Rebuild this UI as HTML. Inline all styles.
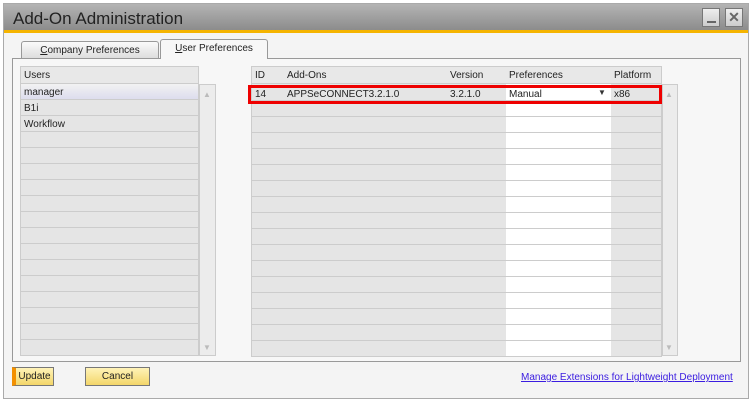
<!DOCTYPE html>
<html><head><style>
*{margin:0;padding:0;box-sizing:border-box}
body{width:752px;height:402px;background:#fff;font-family:"Liberation Sans",sans-serif;font-size:10px;color:#222;position:relative;overflow:hidden}
.abs{position:absolute}
.win{left:3px;top:3px;width:746px;height:396px;border:1px solid #aaa;background:#f4f4f4}
.title{left:4px;top:4px;width:744px;height:26px;background:linear-gradient(#b4b4b4,#8c8c8c);font-size:17px;color:#222;padding:5px 0 0 9px}
.orange{left:4px;top:30px;width:744px;height:3px;background:#f5b400}
.tbtn{top:8px;width:18px;height:19px;border:1px solid #777;background:linear-gradient(#eee,#ccc)}
.tab{height:17px;border:1px solid #999;border-bottom:none;border-radius:3px 3px 0 0;text-align:center;padding-top:3px}
.panel{left:12px;top:58px;width:729px;height:304px;border:1px solid #999;background:#f7f7f7}
.cell{position:absolute;border-right:1px solid #ccc;border-bottom:1px solid #ccc;background:#e5e5e5;padding:3px 3px;white-space:nowrap}
.sb{background:#ececec;border:1px solid #ccc}
.btn{top:367px;height:19px;border:1px solid #777;background:linear-gradient(#fff3b8,#f3d66a);text-align:center;padding-top:3px}
</style></head><body>
<div class="abs win"></div>
<div class="abs title">Add-On Administration</div>
<div class="abs orange"></div>
<div class="abs tbtn" style="left:702px"><div class="abs" style="left:4px;top:12px;width:9px;height:2px;background:#666"></div></div>
<div class="abs tbtn" style="left:725px;color:#666;font-size:14px;font-weight:bold;text-align:center;line-height:17px">✕</div>
<div class="abs tab" style="left:21px;top:41px;width:138px;background:linear-gradient(#fafafa,#ddd)"><u>C</u>ompany Preferences</div>
<div class="abs tab" style="left:160px;top:39px;width:108px;height:20px;background:#f7f7f7;z-index:2"><u>U</u>ser Preferences</div>
<div class="abs panel"></div>
<div id="g"></div>
<div class="abs" style="left:248px;top:85px;width:414px;height:19px;border:3px solid #e00;z-index:5"></div>
<div class="abs btn" style="left:12px;width:42px;border-left:4px solid #f39000">Update</div>
<div class="abs btn" style="left:85px;width:65px">Cancel</div>
<div class="abs" style="left:521px;top:372px;color:#3a1ce0;text-decoration:underline">Manage Extensions for Lightweight Deployment</div>
<script>
var h='';
function c(x,y,w,hh,t,st){h+='<div class="cell" style="left:'+x+'px;top:'+y+'px;width:'+w+'px;height:'+hh+'px;'+(st||'')+'">'+(t||'')+'</div>';}
c(20,66,179,18,'Users','background:#e8e8e8;border-top:1px solid #ccc;border-left:1px solid #ccc');
var u=['manager','B1i','Workflow'];
for(var i=0;i<17;i++){var y=84+i*16;c(20,y,179,16,u[i]||'',(i==0?'background:linear-gradient(#f2f2f2,#dde);':'')+'border-left:1px solid #ccc');}
var cols=[[251,34,'ID'],[284,164,'Add-Ons'],[447,60,'Version'],[506,106,'Preferences'],[611,51,'Platform']];
var r=['14','APPSeCONNECT3.2.1.0','3.2.1.0','Manual','x86'];
cols.forEach(function(cc,j){c(cc[0],66,cc[1],18,cc[2],'background:#e8e8e8;border-top:1px solid #ccc;'+(j==0?'border-left:1px solid #ccc':''));
for(var i=0;i<17;i++){var y=i==0?84:85+i*16;c(cc[0],y,cc[1],i==0?17:16,i==0?r[j]:'',(i==0?'padding-top:5px;':'')+(j==3?'background:#fff;':'')+(j==0?'border-left:1px solid #ccc;':''));}});
h+='<div class="abs sb" style="left:199px;top:84px;width:17px;height:272px"></div><div class="abs" style="left:203px;top:90px;color:#bbb;font-size:8px">▲</div><div class="abs" style="left:203px;top:343px;color:#bbb;font-size:8px">▼</div>';
h+='<div class="abs sb" style="left:662px;top:84px;width:16px;height:272px"></div><div class="abs" style="left:665px;top:90px;color:#bbb;font-size:8px">▲</div><div class="abs" style="left:665px;top:343px;color:#bbb;font-size:8px">▼</div>';
h+='<div class="abs" style="left:598px;top:88px;font-size:8px;color:#333;z-index:6">▼</div>';
document.getElementById('g').innerHTML=h;
</script>
</body></html>
